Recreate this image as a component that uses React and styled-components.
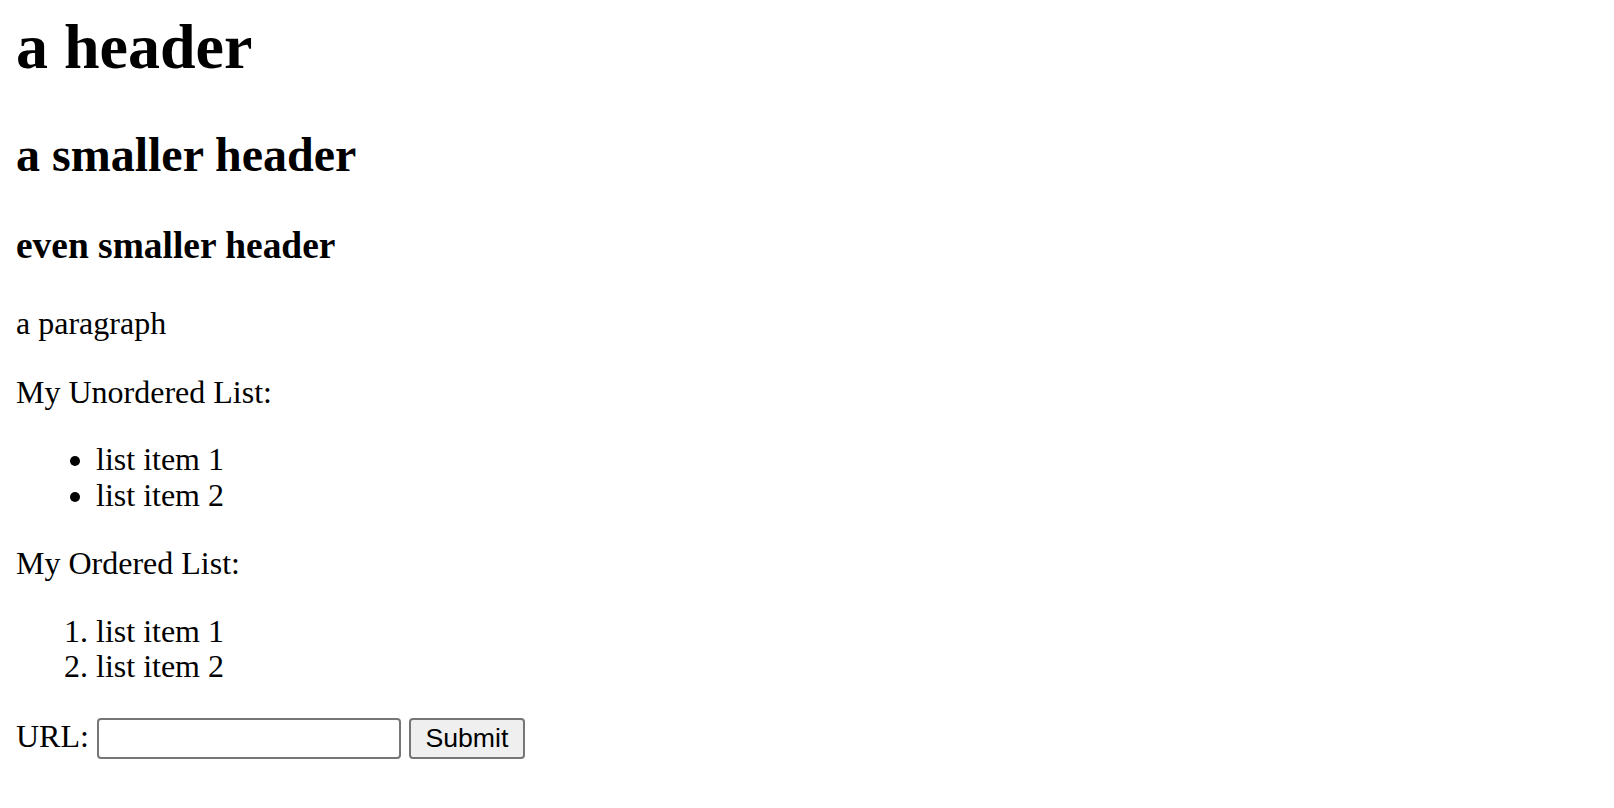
import React from 'react';
import styled, { createGlobalStyle } from 'styled-components';

const GlobalStyle = createGlobalStyle`
  html, body {
    background: #fff;
  }
  body {
    margin: 0 16px 16px;
    font-family: 'Liberation Serif', 'Times New Roman', serif;
    font-size: 32px;
    line-height: 36.5px;
    color: #000;
  }
`;

const Page = styled.div`
  display: flow-root;
  padding-top: 10px;
`;

const Heading = styled.h1`
  font-size: ${(p) => p.$size}px;
  font-weight: bold;
  line-height: normal;
  margin: 0 0 ${(p) => p.$gap}px;
`;

const Para = styled.p`
  margin: 0 0 32px;
`;

const List = styled.ul`
  margin: 0 0 ${(p) => p.$gap || 32}px;
  padding-left: 80px;
  line-height: 35.5px;
`;

const Form = styled.form`
  display: flex;
  align-items: flex-start;
  gap: 8px;
`;

const Label = styled.span`
  line-height: normal;
`;

const Field = styled.input`
  width: 304px;
  height: 41px;
  box-sizing: border-box;
  border: 2px solid #767676;
  border-radius: 4px;
  background: #fff;
  padding: 2px 4px;
  font-size: 26px;
  font-family: 'Liberation Sans', Arial, sans-serif;
`;

const Button = styled.button`
  width: 116px;
  height: 41px;
  box-sizing: border-box;
  border: 2px solid #767676;
  border-radius: 4px;
  background: #efefef;
  color: #000;
  font-size: 26.67px;
  font-family: 'Liberation Sans', Arial, sans-serif;
  padding: 0;
`;

export default function App() {
  return (
    <>
      <GlobalStyle />
      <Page>
        <Heading as="h1" $size={64} $gap={43}>a header</Heading>
        <Heading as="h2" $size={48} $gap={42}>a smaller header</Heading>
        <Heading as="h3" $size={37.44} $gap={38}>even smaller header</Heading>
        <Para>a paragraph</Para>
        <Para>My Unordered List:</Para>
        <List>
          <li>list item 1</li>
          <li>list item 2</li>
        </List>
        <Para>My Ordered List:</Para>
        <List as="ol" $gap={33}>
          <li>list item 1</li>
          <li>list item 2</li>
        </List>
        <Form onSubmit={(e) => e.preventDefault()}>
          <Label>URL:</Label>
          <Field type="text" />
          <Button type="submit">Submit</Button>
        </Form>
      </Page>
    </>
  );
}
